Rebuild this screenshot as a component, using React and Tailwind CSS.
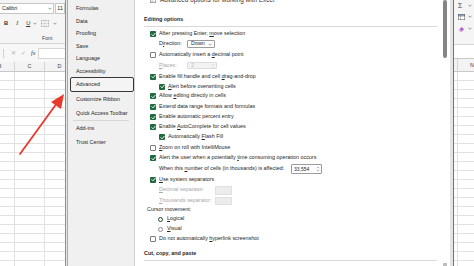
import React from "react";

function Box({ checked }) {
  if (checked) {
    return (
      <span className="w-[6px] h-[6px] rounded-[1px] bg-[#1e6b3f] flex items-center justify-center shrink-0">
        <svg width="5" height="5" viewBox="0 0 10 10">
          <path d="M1.8 5.3 L4.1 7.6 L8.4 2.6" stroke="white" strokeWidth="1.9" fill="none" strokeLinecap="round" strokeLinejoin="round" />
        </svg>
      </span>
    );
  }
  return <span className="w-[6px] h-[6px] rounded-[1px] border border-[#7c7c7c] bg-white shrink-0" />;
}

function U({ children }) {
  return <span className="underline decoration-[0.5px] underline-offset-[0.5px]">{children}</span>;
}

function CRow({ h, indent, checked, children }) {
  return (
    <div className={`flex items-center gap-[3px] ${h} ${indent ? "pl-[24px]" : "pl-[15px]"}`}>
      <Box checked={checked} />
      <span className="whitespace-nowrap">{children}</span>
    </div>
  );
}

function Spin({ gray }) {
  return (
    <svg width="4" height="6" viewBox="0 0 8 12" className="shrink-0">
      <path d="M1.5 4.5 L4 2 L6.5 4.5" stroke={gray ? "#c4c4c4" : "#6a6a6a"} strokeWidth="1" fill="none" />
      <path d="M1.5 7.5 L4 10 L6.5 7.5" stroke={gray ? "#c4c4c4" : "#6a6a6a"} strokeWidth="1" fill="none" />
    </svg>
  );
}

function Caret({ color = "#555" }) {
  return (
    <svg width="4" height="3" viewBox="0 0 8 6" className="shrink-0">
      <path d="M1 1.5 L4 4.5 L7 1.5" stroke={color} strokeWidth="1.2" fill="none" />
    </svg>
  );
}

function ExcelLeft() {
  const rows = Array.from({ length: 22 });
  return (
    <div className="w-[65px] shrink-0 flex flex-col overflow-hidden bg-white">
      <div className="h-[44px] bg-[#f5f5f5] border-b border-[#d4d4d4] flex flex-col shrink-0">
        <div className="mt-[3px] flex h-[11px]">
          <div className="w-[57px] h-[11px] border border-l-0 border-[#c6c6c6] bg-white flex items-center pl-[2px] pr-[1px] text-[5.4px]">
            <span className="flex-1">Calibri</span>
            <Caret />
          </div>
          <div className="ml-[1px] w-[10px] h-[11px] border border-[#c6c6c6] bg-white flex items-center pl-[1px] text-[5.4px]">
            11
          </div>
        </div>
        <div className="mt-[6px] h-[7px] flex items-center text-[5.8px] text-[#333]">
          <span className="ml-[4px] font-bold">B</span>
          <span className="ml-[8px] italic font-['Liberation_Serif',serif]">I</span>
          <span className="ml-[8px] underline decoration-[0.5px]">U</span>
          <span className="ml-[3px]"><Caret /></span>
          <span className="ml-[4px]">
            <svg width="8" height="7" viewBox="0 0 16 14">
              <rect x="1" y="1" width="14" height="12" fill="none" stroke="#666" strokeWidth="1" strokeDasharray="2 1.2" />
              <line x1="8" y1="1" x2="8" y2="13" stroke="#888" strokeWidth="0.8" strokeDasharray="1.5 1.2" />
              <line x1="1" y1="7" x2="15" y2="7" stroke="#888" strokeWidth="0.8" strokeDasharray="1.5 1.2" />
            </svg>
          </span>
          <span className="ml-[4px]"><Caret /></span>
        </div>
        <div className="mt-[8px] h-[8px] flex items-center pl-[42px] text-[5.2px] text-[#444]">Font</div>
      </div>
      <div className="h-[18px] bg-[#f7f7f7] flex items-center shrink-0">
        <div className="ml-[3px] w-px h-[9px] bg-[#cfcfcf]" />
        <span className="ml-[7px] text-[6px] text-[#b0b0b0]">✕</span>
        <span className="ml-[5px] text-[6px] text-[#b0b0b0]">✓</span>
        <span className="ml-[5px] text-[6px] italic font-['Liberation_Serif',serif] text-[#333]">fx</span>
        <div className="ml-[3px] flex-1 h-[11px] bg-white border border-r-0 border-[#d6d6d6]" />
      </div>
      <div className="h-[10px] bg-[#f3f3f3] border-b border-[#c8c8c8] flex -ml-[15px] shrink-0 text-[5.4px] text-[#444]">
        {["B", "C", "D"].map((c) => (
          <div key={c} className="w-[30px] shrink-0 border-r border-[#d4d4d4] flex items-center justify-center">{c}</div>
        ))}
      </div>
      {rows.map((_, i) => (
        <div key={i} className="h-[9px] shrink-0 border-b border-[#e1e1e1] flex -ml-[15px]">
          <div className="w-[30px] shrink-0 border-r border-[#e1e1e1]" />
          <div className="w-[30px] shrink-0 border-r border-[#e1e1e1]" />
          <div className="w-[30px] shrink-0 border-r border-[#e1e1e1]" />
        </div>
      ))}
    </div>
  );
}

function Nav() {
  const item = "h-[12.5px] flex items-center pl-[8px] whitespace-nowrap";
  const item2 = "h-[14px] flex items-center pl-[8px] whitespace-nowrap";
  return (
    <div className="w-[67px] shrink-0 bg-[#f0f0f0] border-r border-[#d2d2d2] flex flex-col pt-[2px] text-[5.4px] text-[#262626]">
      <div className={item}>Formulas</div>
      <div className={item}>Data</div>
      <div className={item}>Proofing</div>
      <div className={item}>Save</div>
      <div className={item}>Language</div>
      <div className={item}>Accessibility</div>
      <div className="ml-[2px] w-[64px] h-[15px] border-[1.5px] border-[#383838] rounded-[2px] flex items-center pl-[5px] bg-[#f4f4f4]">
        Advanced
      </div>
      <div className={item2}>Customize Ribbon</div>
      <div className="h-[14px] flex items-center pl-[8px] whitespace-nowrap">Quick Access Toolbar</div>
      <div className="mx-[5px] h-px bg-[#d6d6d6]" />
      <div className={item2}>Add-ins</div>
      <div className={item2}>Trust Center</div>
    </div>
  );
}

function Content() {
  const gray = "text-[#a8a8a8]";
  return (
    <div className="flex-1 min-w-0 bg-white flex flex-col text-[5.4px] leading-none text-[#262626]">
      <div className="-mt-[6px] h-[12px] flex items-center gap-[4px] pl-[15px] text-[6.4px] text-[#333]">
        <svg width="6" height="5" viewBox="0 0 12 10" className="shrink-0">
          <rect x="0.5" y="0.5" width="11" height="9" fill="none" stroke="#666" strokeWidth="1" />
          <line x1="2.5" y1="3.5" x2="9.5" y2="3.5" stroke="#666" strokeWidth="1" />
          <line x1="2.5" y1="6.5" x2="7.5" y2="6.5" stroke="#666" strokeWidth="1" />
        </svg>
        <span className="whitespace-nowrap">Advanced options for working with Excel</span>
      </div>
      <div className="mt-[7px] h-[14px] mx-[9px] mr-[6px] border-b border-[#d9d9d9] flex items-center font-bold text-[5.4px]">
        Editing options
      </div>

      <div className="mt-[2px]" />
      <CRow h="h-[10px]" checked>After pressing Enter, <U>m</U>ove selection</CRow>
      <div className="h-[10px] flex items-center pl-[24px]">
        <span className="w-[28px] whitespace-nowrap">D<U>i</U>rection:</span>
        <div className="w-[28px] h-[8px] border border-[#9c9c9c] rounded-[1px] bg-white flex items-center pl-[3px] pr-[2px]">
          <span className="flex-1">Down</span>
          <Caret />
        </div>
      </div>
      <CRow h="h-[11px]">Automatically insert a <U>d</U>ecimal point</CRow>
      <div className={`h-[11px] flex items-center pl-[24px] ${gray}`}>
        <span className="w-[28px] whitespace-nowrap"><U>P</U>laces:</span>
        <div className="w-[30px] h-[7px] border border-[#dcdcdc] rounded-[1px] bg-[#f3f3f3] flex items-center pl-[3px] pr-[1px]">
          <span className="flex-1 text-[#b8b8b8]">2</span>
          <Spin gray />
        </div>
      </div>
      <CRow h="h-[11px]" checked>Enable fill handle and cell <U>d</U>rag-and-drop</CRow>
      <CRow h="h-[9px]" indent checked><U>A</U>lert before overwriting cells</CRow>
      <CRow h="h-[10px]" checked>Allow <U>e</U>diting directly in cells</CRow>
      <CRow h="h-[11px]" checked>Extend data range formats and formulas</CRow>
      <CRow h="h-[10px]" checked>Enable automatic percent entry</CRow>
      <CRow h="h-[10px]" checked>Enable <U>A</U>utoComplete for cell values</CRow>
      <CRow h="h-[10px]" indent checked>Automatically <U>F</U>lash Fill</CRow>
      <CRow h="h-[11px]"><U>Z</U>oom on roll with IntelliMouse</CRow>
      <CRow h="h-[10px]" checked>Alert the user when a potentially <U>t</U>ime consuming operation occurs</CRow>
      <div className="h-[12px] flex items-center pl-[24px]">
        <span className="w-[132px] whitespace-nowrap">When this <U>n</U>umber of cells (in thousands) is affected:</span>
        <div className="w-[31px] h-[10px] border border-[#9c9c9c] rounded-[1px] bg-white flex items-center pl-[2px] pr-[1px] text-[5px]">
          <span className="flex-1">33,554</span>
          <Spin />
        </div>
      </div>
      <CRow h="h-[9px]" checked><U>U</U>se system separators</CRow>
      <div className={`h-[12px] flex items-center pl-[24px] ${gray}`}>
        <span className="w-[56px] whitespace-nowrap"><U>D</U>ecimal separator:</span>
        <div className="w-[17px] h-[9px] border border-[#e0e0e0] bg-[#ececec]" />
      </div>
      <div className={`h-[10px] flex items-center pl-[24px] ${gray}`}>
        <span className="w-[56px] whitespace-nowrap"><U>T</U>housands separator:</span>
        <div className="w-[17px] h-[8px] border border-[#e0e0e0] bg-[#ececec]" />
      </div>
      <div className="h-[8px] flex items-center pl-[12px]">Cursor movement:</div>
      <div className="h-[10px] flex items-center gap-[4px] pl-[23px]">
        <span className="w-[5px] h-[5px] rounded-full border-[1.5px] border-[#1f4d33] bg-white shrink-0" />
        <span><U>L</U>ogical</span>
      </div>
      <div className="h-[10px] flex items-center gap-[4px] pl-[23px]">
        <span className="w-[5px] h-[5px] rounded-full border border-[#8a8a8a] bg-white shrink-0" />
        <span><U>V</U>isual</span>
      </div>
      <CRow h="h-[10px]">Do not automatically <U>h</U>yperlink screenshot</CRow>
      <div className="mt-[3px] h-[14px] ml-[9px] mr-[6px] border-b border-[#d9d9d9] flex items-center font-bold shrink-0">
        Cut, copy, and paste
      </div>
    </div>
  );
}

function Scroll() {
  return (
    <div className="w-[7px] shrink-0 bg-white flex flex-col">
      <div className="w-[4px] h-[58px] rounded-full bg-[#858585]" />
      <div className="flex-1" />
      <div className="w-[4px] h-[3px] bg-[#bdbdbd]" />
    </div>
  );
}

function ExcelRight() {
  const rows = Array.from({ length: 22 });
  return (
    <div className="w-[20px] shrink-0 flex flex-col overflow-hidden bg-white">
      <div className="h-[45px] shrink-0 bg-[#f5f5f5] border-b border-[#d4d4d4] flex flex-col pl-[4px]">
        <div className="mt-[1px] h-[8px] flex items-center">
          <span className="text-[7px] leading-none text-[#444] w-[10px]">Σ</span>
          <Caret />
        </div>
        <div className="mt-[4px] h-[7px] flex items-center">
          <span className="w-[10px]">
            <svg width="7" height="6" viewBox="0 0 14 12">
              <rect x="0.5" y="0.5" width="13" height="11" fill="white" stroke="#555" strokeWidth="1" />
              <rect x="0.5" y="0.5" width="13" height="3.5" fill="#9fb6d8" stroke="#555" strokeWidth="1" />
              <line x1="5" y1="4" x2="5" y2="11.5" stroke="#555" strokeWidth="0.8" />
            </svg>
          </span>
          <Caret />
        </div>
        <div className="mt-[5px] h-[7px] flex items-center">
          <span className="w-[10px]">
            <svg width="7" height="6" viewBox="0 0 14 12">
              <path d="M2 8 L7 2 L12 6 L8 11 L4 11 Z" fill="#b05cc9" />
              <path d="M2 8 L4 11 L8 11 L5 7 Z" fill="#e3b6ee" />
            </svg>
          </span>
          <Caret />
        </div>
      </div>
      <div className="h-[13px] shrink-0 bg-white" />
      <div className="h-[14px] shrink-0 bg-[#f3f3f3] border-b border-t border-[#c8c8c8] flex text-[5.4px] text-[#444]">
        <div className="w-[4px] border-r border-[#d4d4d4]" />
        <div className="flex-1 flex items-center pl-[12px]">N</div>
      </div>
      {rows.map((_, i) => (
        <div key={i} className="h-[9px] shrink-0 border-b border-[#e1e1e1] flex">
          <div className="w-[4px] border-r border-[#e1e1e1]" />
        </div>
      ))}
    </div>
  );
}

function Arrow() {
  return (
    <svg className="absolute left-0 top-0 pointer-events-none" width="474" height="266" viewBox="0 0 474 266">
      <line x1="20" y1="154" x2="57" y2="103" stroke="#e8392d" strokeWidth="1.8" strokeLinecap="round" />
      <polygon points="64,94 61,109 51,102" fill="#e8392d" />
    </svg>
  );
}

export default function App() {
  return (
    <div className="relative w-[474px] h-[266px] overflow-hidden flex bg-white font-['Liberation_Sans',Arial,sans-serif] text-[#262626]">
      <ExcelLeft />
      <div className="w-px shrink-0 bg-[#8e8e8e]" />
      <div className="w-px shrink-0 bg-[#e6e6e6]" />
      <div className="w-px shrink-0 bg-[#a9a9a9]" />
      <Nav />
      <Content />
      <Scroll />
      <div className="w-[3px] shrink-0 bg-[#e4e4e4]" />
      <div className="w-px shrink-0 bg-[#737373]" />
      <ExcelRight />
      <Arrow />
    </div>
  );
}
